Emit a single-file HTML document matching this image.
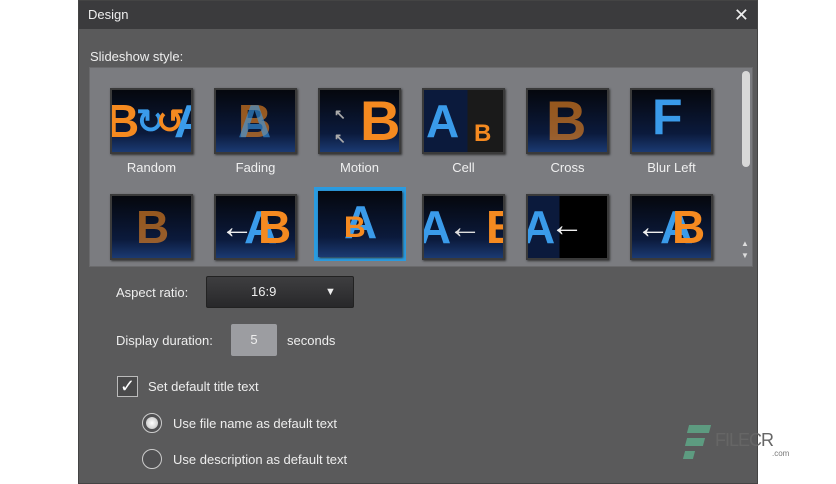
<!DOCTYPE html>
<html><head><meta charset="utf-8"><style>
*{margin:0;padding:0;box-sizing:border-box}
body{width:836px;height:484px;background:#fff;font-family:"Liberation Sans",sans-serif;position:relative;overflow:hidden}
.win{position:absolute;left:78px;top:0;width:680px;height:484px;background:#5a5a5b;border:1px solid #444}
.title{position:absolute;left:0;top:0;width:678px;height:28px;background:#3b3b3d;color:#eee;font-size:13px;line-height:28px;padding-left:9px}
.x{position:absolute;right:8px;top:0;font-size:18px;color:#eee}
.lbl{position:absolute;color:#eee;font-size:13px}
.panel{position:absolute;left:10px;top:66px;width:664px;height:200px;background:#7b7c80;border:1px solid #6a6a6c}
.t{position:absolute;width:83px;height:66px;background:linear-gradient(#05070d,#0b1a3c 70%,#1b3a72);border:2px solid #3a3a3a;box-shadow:1px 1px 2px #333;overflow:hidden}
.t span{position:absolute;font-weight:bold;font-size:46px;top:4px;font-family:"Liberation Sans",sans-serif}
.a{color:#3a9bea}.b{color:#f58a20}
.cap{position:absolute;width:83px;text-align:center;color:#f0f0f0;font-size:13px}
.sb{position:absolute;left:652px;top:3px;width:8px;height:96px;background:#d8d8d8;border-radius:4px}
</style></head><body>
<div class="win">
<div class="title">Design<span class="x">✕</span></div>
<div class="lbl" style="left:11px;top:48px">Slideshow style:</div>
<div class="panel">
<div class="sb"></div>
<div style="position:absolute;left:651px;top:170px;color:#ddd;font-size:8px;line-height:12px">▲<br>▼</div>
</div>
<div class="t" style="left:31px;top:87px"><span class="b" style="left:-6px">B</span><span class="a" style="left:24px;font-size:34px;top:12px">↻</span><span class="b" style="left:44px;font-size:34px;top:12px">↺</span><span class="a" style="left:62px">A</span></div>
<div class="t" style="left:135px;top:87px"><span class="b" style="left:22px;opacity:.6">B</span><span class="a" style="left:22px;opacity:.6">A</span></div>
<div class="t" style="left:239px;top:87px"><span class="b" style="left:40px;font-size:56px;top:-2px">B</span><span style="left:14px;color:#aaa;font-size:14px;top:16px">↖</span><span style="left:14px;color:#aaa;font-size:14px;top:40px">↖</span></div>
<div class="t" style="left:343px;top:87px;background:linear-gradient(90deg,#0b1a3c 55%,#1a1a1a 55%)"><span class="a" style="left:2px">A</span><span class="b" style="left:50px;font-size:24px;top:30px">B</span></div>
<div class="t" style="left:447px;top:87px"><span class="b" style="left:18px;font-size:56px;top:-2px;opacity:.6">B</span></div>
<div class="t" style="left:551px;top:87px"><span class="a" style="left:20px;font-size:50px;top:-2px">F</span></div>
<div class="cap" style="left:31px;top:159px">Random</div>
<div class="cap" style="left:135px;top:159px">Fading</div>
<div class="cap" style="left:239px;top:159px">Motion</div>
<div class="cap" style="left:343px;top:159px">Cell</div>
<div class="cap" style="left:447px;top:159px">Cross</div>
<div class="cap" style="left:551px;top:159px">Blur Left</div>
<div class="t" style="left:31px;top:193px"><span class="b" style="left:24px;opacity:.6">B</span></div>
<div class="t" style="left:135px;top:193px"><span style="left:4px;color:#eee;font-size:34px;top:12px">←</span><span class="a" style="left:28px">A</span><span class="b" style="left:42px">B</span></div>
<div style="position:absolute;left:235px;top:186px;width:92px;height:74px;border:4px solid #2a9be0"></div>
<div class="t" style="left:239px;top:190px;width:84px;height:66px;border:none"><span class="a" style="left:26px">A</span><span class="b" style="left:26px;font-size:30px;top:20px">B</span></div>
<div class="t" style="left:343px;top:193px"><span class="a" style="left:-6px">A</span><span style="left:24px;color:#ddd;font-size:34px;top:12px">←</span><span class="b" style="left:62px">E</span></div>
<div class="t" style="left:447px;top:193px;background:linear-gradient(90deg,#0b1a3c 40%,#000 40%)"><span class="a" style="left:-6px">A</span><span style="left:22px;color:#eee;font-size:34px;top:10px">←</span></div>
<div class="t" style="left:551px;top:193px"><span style="left:4px;color:#eee;font-size:34px;top:12px">←</span><span class="a" style="left:28px">A</span><span class="b" style="left:40px">B</span></div>
<div class="lbl" style="left:37px;top:284px">Aspect ratio:</div>
<div style="position:absolute;left:127px;top:275px;width:148px;height:32px;background:linear-gradient(#3e3e40,#28282a);border:1px solid #222;border-radius:2px;color:#eee;font-size:13px;line-height:30px"><span style="position:absolute;left:44px">16:9</span><span style="position:absolute;left:118px;font-size:11px">▼</span></div>
<div class="lbl" style="left:37px;top:332px">Display duration:</div>
<div style="position:absolute;left:152px;top:323px;width:46px;height:32px;background:#9c9da1;border-radius:2px;color:#eee;font-size:13px;line-height:32px;text-align:center">5</div>
<div class="lbl" style="left:208px;top:332px">seconds</div>
<div style="position:absolute;left:38px;top:375px;width:21px;height:21px;border:1px solid #bbb;background:#4a4a4b;color:#fff;font-size:18px;line-height:19px;text-align:center">✓</div>
<div class="lbl" style="left:69px;top:378px">Set default title text</div>
<div style="position:absolute;left:63px;top:412px;width:20px;height:20px;border-radius:50%;border:1px solid #ccc;background:#505052"><div style="margin:3px;width:12px;height:12px;border-radius:50%;background:radial-gradient(#fff,#bbb)"></div></div>
<div class="lbl" style="left:94px;top:415px">Use file name as default text</div>
<div style="position:absolute;left:63px;top:448px;width:20px;height:20px;border-radius:50%;border:1px solid #ccc;background:#505052"></div>
<div class="lbl" style="left:94px;top:451px">Use description as default text</div>
</div>
<div style="position:absolute;left:688px;top:425px;width:22px;height:8px;background:#5d9b80;transform:skewX(-15deg)"></div>
<div style="position:absolute;left:686px;top:438px;width:18px;height:8px;background:#5d9b80;transform:skewX(-15deg)"></div>
<div style="position:absolute;left:684px;top:451px;width:10px;height:8px;background:#5d9b80;transform:skewX(-15deg)"></div>
<div style="position:absolute;left:715px;top:430px;color:#666;font-size:18px;letter-spacing:-1px">FILECR</div>
<div style="position:absolute;left:772px;top:449px;color:#777;font-size:8px">.com</div>
</body></html>
